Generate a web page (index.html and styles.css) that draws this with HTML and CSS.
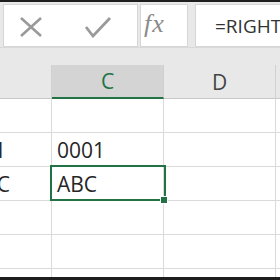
FILE: index.html
```html
<!DOCTYPE html>
<html lang="en">
<head>
    <meta charset="UTF-8">
    <meta name="viewport" content="width=device-width, initial-scale=1.0">
    <title>Sheet</title>
    <link rel="stylesheet" href="styles.css">
</head>
<body>
    <div class="window">
        <div class="topline"></div>
        <div class="formula-bar">
            <div class="fb-buttons">
                <svg class="icon" width="24" height="20" viewBox="0 0 24 20">
                    <path d="M2 1 L22 19 M22 1 L2 19" stroke="#9a9a9a" stroke-width="2.6" fill="none"/>
                </svg>
                <svg class="icon" width="28" height="22" viewBox="0 0 28 22">
                    <path d="M2 11 L9 20 L26 2" stroke="#9a9a9a" stroke-width="2.8" fill="none"/>
                </svg>
            </div>
            <div class="fb-fx">fx</div>
            <div class="fb-input">=RIGHT(A3,4)</div>
        </div>
        <div class="gap"></div>

        <div class="sheet">
            <div class="hd"></div>
            <div class="hd active">C</div>
            <div class="hd">D</div>
            <div class="hd last"></div>

            <div class="cell"></div><div class="cell"></div><div class="cell"></div><div class="cell last"></div>
            <div class="cell b-one">0001</div><div class="cell">0001</div><div class="cell"></div><div class="cell last"></div>
            <div class="cell b-abc">ABC</div><div class="cell">ABC</div><div class="cell"></div><div class="cell last"></div>
            <div class="cell"></div><div class="cell"></div><div class="cell"></div><div class="cell last"></div>
            <div class="cell"></div><div class="cell"></div><div class="cell"></div><div class="cell last"></div>
            <div class="cell"></div><div class="cell"></div><div class="cell"></div><div class="cell last"></div>

            <div class="selection"><span class="handle"></span></div>
        </div>
        <div class="bottomline"></div>
    </div>
</body>
</html>
```

FILE: styles.css
```css
body {
    margin: 0;
    font-family: "Open Sans", "Liberation Sans", sans-serif;
    background-color: #fff;
}
.window {
    width: 280px;
    height: 280px;
    overflow: hidden;
    display: flex;
    flex-direction: column;
    background-color: #e8e8e8;
}
.window > div {
    flex-shrink: 0;
}
.topline {
    height: 2px;
    background-color: #1e1e1e;
}
.formula-bar {
    height: 43px;
    padding-top: 2px;
    display: flex;
}
.fb-buttons {
    width: 135px;
    margin-left: 3px;
    background-color: #fff;
    border: 1px solid #d6d6d6;
    display: flex;
    align-items: center;
    gap: 41px;
    padding-left: 15px;
    padding-top: 3px;
    box-sizing: border-box;
}
.fb-fx {
    width: 48px;
    margin-left: 2px;
    background-color: #fff;
    border: 1px solid #d6d6d6;
    box-sizing: border-box;
    font-family: "Liberation Serif", serif;
    font-style: italic;
    font-size: 26px;
    letter-spacing: 1px;
    color: #8a8a8a;
    padding-left: 3px;
    line-height: 38px;
}
.fb-input {
    flex: 1;
    margin-left: 7px;
    background-color: #fff;
    border: 1px solid #d6d6d6;
    border-right: none;
    box-sizing: border-box;
    padding-left: 19px;
    padding-top: 8px;
    font-size: 19px;
    color: #333;
    white-space: nowrap;
    overflow: hidden;
}
.gap {
    height: 17px;
    border-top: 1px solid #d9d9d9;
}
.window > .sheet {
    flex: 1;
    flex-shrink: 1;
    min-height: 0;
    overflow: hidden;
}
.sheet {
    position: relative;
    display: grid;
    grid-template-columns: 52px 112px 112px 1fr;
    grid-template-rows: repeat(7, 34px);
    background-color: #fff;
}
.hd {
    background-color: #e8e8e8;
    border-right: 1px solid #d0d0d0;
    border-bottom: 1px solid #c8c8c8;
    font-size: 21px;
    color: #444;
    display: flex;
    align-items: center;
    justify-content: center;
}
.hd.active {
    background-color: #d4d4d4;
    color: #217346;
    border-bottom: 2px solid #217346;
}
.hd.last, .cell.last {
    border-right: none;
}
.cell {
    border-right: 1px solid #dadada;
    border-bottom: 1px solid #dadada;
    font-size: 21px;
    color: #262626;
    display: flex;
    align-items: center;
    padding-left: 5px;
    white-space: nowrap;
    overflow: hidden;
}
.b-one {
    justify-content: flex-end;
    padding-left: 0;
    padding-right: 45px;
}
.b-abc {
    justify-content: flex-end;
    padding-left: 0;
    padding-right: 41px;
}
.selection {
    position: absolute;
    left: 50px;
    top: 100px;
    width: 116px;
    height: 36px;
    border: 2px solid #217346;
    box-sizing: border-box;
}
.handle {
    position: absolute;
    right: -4px;
    bottom: -5px;
    width: 6px;
    height: 6px;
    background-color: #217346;
    border: 1px solid #fff;
}
.bottomline {
    height: 3px;
    background-color: #1e1e1e;
}
```
